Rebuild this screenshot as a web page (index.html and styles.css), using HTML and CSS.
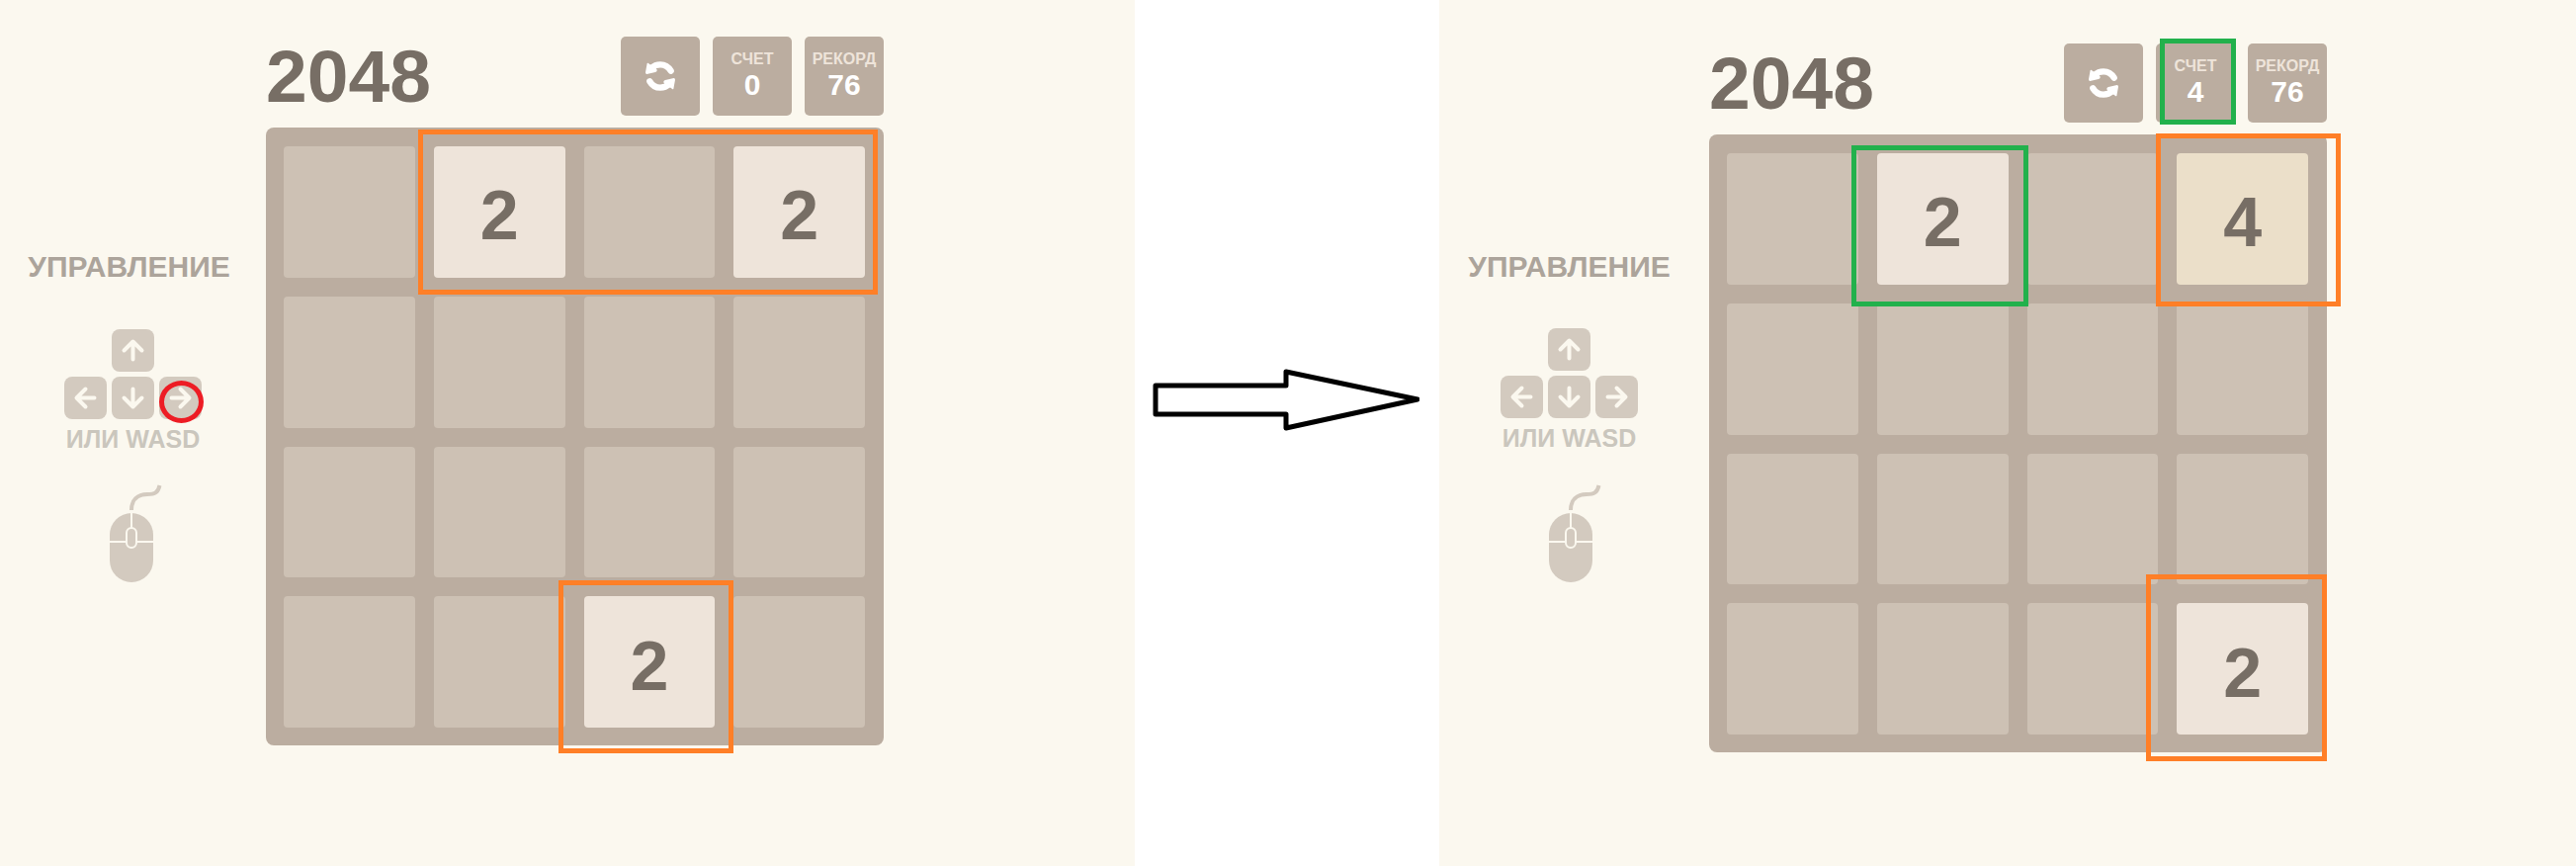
FILE: index.html
```html
<!DOCTYPE html>
<html lang="ru">
<head>
<meta charset="utf-8">
<title>2048</title>
<link rel="stylesheet" href="styles.css">
</head>
<body>
<svg class="sprite" aria-hidden="true">
  <symbol id="icon-refresh" viewBox="0 0 90 90">
    <g id="refresh-half">
      <path d="M77 29C70 17 58 10 45 10C35 10 26 13 19 20" fill="none" stroke="currentColor" stroke-width="19" stroke-linecap="round"/>
      <path d="M5 6Q8 3 12 9L20 12L34 24Q37 31 30 33L4 39Q0 39 0 34Z" fill="currentColor"/>
    </g>
    <use href="#refresh-half" transform="rotate(180 45 45)"/>
  </symbol>
  <symbol id="icon-arrow" viewBox="0 0 43 43">
    <path d="M21.500 30.500V13M12.500 21.500L21.500 12.500L30.500 21.500" fill="none" stroke="currentColor" stroke-width="4" stroke-linecap="round" stroke-linejoin="round"/>
  </symbol>
  <symbol id="icon-mouse" viewBox="0 0 53 100">
    <path d="M22 27C22 17 28 11 38 11C46 11 49 9 50.500 2" fill="none" stroke="currentColor" stroke-width="4"/>
    <rect x="0" y="30" width="44" height="70" rx="22" fill="currentColor"/>
    <path d="M22 29V45M0 59H17M27 59H44" fill="none" stroke="#fbf8ef" stroke-width="2"/>
    <rect x="17" y="45" width="10" height="20" rx="5" fill="currentColor" stroke="#fbf8ef" stroke-width="2"/>
  </symbol>
</svg>
<main class="scene">
  <section class="panel panel-before">
    <aside class="controls">
      <h2 class="controls-title">УПРАВЛЕНИЕ</h2>
      <div class="keys">
        <svg class="key key-up"><use href="#icon-arrow"/></svg>
        <svg class="key key-left"><use href="#icon-arrow"/></svg>
        <svg class="key key-down"><use href="#icon-arrow"/></svg>
        <svg class="key key-right"><use href="#icon-arrow"/></svg>
        <span class="mark mark-key"></span>
      </div>
      <p class="controls-note">ИЛИ WASD</p>
      <svg class="mouse"><use href="#icon-mouse"/></svg>
    </aside>
    <div class="game">
      <header class="top">
        <h1 class="title">2048</h1>
        <div class="stats">
          <button class="box restart" type="button" aria-label="Заново"><svg class="refresh"><use href="#icon-refresh"/></svg></button>
          <div class="box"><span class="label">СЧЕТ</span><span class="value">0</span></div>
          <div class="box"><span class="label">РЕКОРД</span><span class="value">76</span></div>
        </div>
      </header>
      <div class="board">
        <div class="cell"></div><div class="cell two">2</div><div class="cell"></div><div class="cell two">2</div>
        <div class="cell"></div><div class="cell"></div><div class="cell"></div><div class="cell"></div>
        <div class="cell"></div><div class="cell"></div><div class="cell"></div><div class="cell"></div>
        <div class="cell"></div><div class="cell"></div><div class="cell two">2</div><div class="cell"></div>
        <span class="mark orange mark-pair"></span>
        <span class="mark orange mark-bottom"></span>
      </div>
    </div>
  </section>
  <div class="between">
    <svg class="arrow" viewBox="0 0 270 64"><path d="M3 17H135V3L268 31L135 60V46H3Z" fill="none" stroke="#000" stroke-width="5" stroke-linejoin="round"/></svg>
  </div>
  <section class="panel panel-after">
    <aside class="controls">
      <h2 class="controls-title">УПРАВЛЕНИЕ</h2>
      <div class="keys">
        <svg class="key key-up"><use href="#icon-arrow"/></svg>
        <svg class="key key-left"><use href="#icon-arrow"/></svg>
        <svg class="key key-down"><use href="#icon-arrow"/></svg>
        <svg class="key key-right"><use href="#icon-arrow"/></svg>
      </div>
      <p class="controls-note">ИЛИ WASD</p>
      <svg class="mouse"><use href="#icon-mouse"/></svg>
    </aside>
    <div class="game">
      <header class="top">
        <h1 class="title">2048</h1>
        <div class="stats">
          <button class="box restart" type="button" aria-label="Заново"><svg class="refresh"><use href="#icon-refresh"/></svg></button>
          <div class="box"><span class="label">СЧЕТ</span><span class="value">4</span><span class="mark green mark-score"></span></div>
          <div class="box"><span class="label">РЕКОРД</span><span class="value">76</span></div>
        </div>
      </header>
      <div class="board">
        <div class="cell"></div><div class="cell two">2</div><div class="cell"></div><div class="cell four">4</div>
        <div class="cell"></div><div class="cell"></div><div class="cell"></div><div class="cell"></div>
        <div class="cell"></div><div class="cell"></div><div class="cell"></div><div class="cell"></div>
        <div class="cell"></div><div class="cell"></div><div class="cell"></div><div class="cell two">2</div>
        <span class="mark green mark-new"></span>
        <span class="mark orange mark-merged"></span>
        <span class="mark orange mark-moved"></span>
      </div>
    </div>
  </section>
</main>
</body>
</html>
```
FILE: styles.css
```css
* {
  box-sizing: border-box;
}

body {
  margin: 0;
  background: #fff;
  color: #776e65;
  font-family: "Liberation Sans", Arial, sans-serif;
  font-weight: bold;
}

h1, h2, p {
  margin: 0;
}

.sprite {
  position: absolute;
  width: 0;
  height: 0;
}

.scene {
  display: grid;
  grid-template-columns: 1148fr 308fr 1150fr;
  min-height: 100vh;
}

.panel {
  display: grid;
  align-items: start;
  background: #fbf8ef;
}

.panel-before {
  grid-template-columns: 269fr 625fr 254fr;
}

.panel-after {
  grid-template-columns: 273fr 625fr 252fr;
}

/* Controls column */
.controls {
  display: flex;
  flex-direction: column;
  align-items: center;
  padding: 253px 10px 0 0;
}

.panel-before .controls {
  padding-right: 8px;
}

.controls-title {
  color: #aca49b;
  font-size: 30px;
  line-height: 34px;
}

.keys {
  position: relative;
  display: grid;
  grid-template-columns: repeat(3, 43px);
  grid-template-areas: ". up ." "left down right";
  gap: 5px;
  margin-top: 45px;
}

.key {
  width: 43px;
  height: 43px;
  border-radius: 8px;
  background: #d3cabf;
  color: #fbf8ef;
}

.key-up {
  grid-area: up;
}

.key-left {
  grid-area: left;
  transform: rotate(-90deg);
}

.key-down {
  grid-area: down;
  transform: rotate(180deg);
}

.key-right {
  grid-area: right;
  transform: rotate(90deg);
}

.controls-note {
  margin-top: 5px;
  color: #cac6bd;
  font-size: 25px;
  line-height: 30px;
}

.mouse {
  width: 53px;
  height: 100px;
  margin: 31px 0 0 12px;
  color: #d3cabf;
}

.panel-before .keys {
  margin: 46px 0 0 8px;
}

.panel-before .controls-note {
  margin-left: 8px;
}

.panel-before .mouse {
  margin: 30px 0 0 14px;
}

/* Game column */
.top {
  display: flex;
  align-items: center;
  justify-content: space-between;
  padding: 37px 0 12px;
}

.panel-after .top {
  padding-top: 44px;
}

.title {
  font-size: 75px;
  line-height: 80px;
}

.stats {
  display: flex;
  gap: 13px;
}

.box {
  position: relative;
  display: flex;
  flex-direction: column;
  align-items: center;
  justify-content: center;
  width: 80px;
  height: 80px;
  padding: 0;
  border: 0;
  border-radius: 5px;
  background: #bbada0;
  color: #fff;
}

.refresh {
  width: 30px;
  height: 30px;
}

.label {
  color: #eee4da;
  font-size: 16px;
  line-height: 18px;
}

.value {
  font-size: 30px;
  line-height: 34px;
}

.board {
  position: relative;
  display: grid;
  grid-template-columns: repeat(4, 1fr);
  gap: 19px;
  padding: 19px 19px 18px 18px;
  border-radius: 8px;
  background: #bbada0;
}

.cell {
  display: flex;
  align-items: center;
  justify-content: center;
  aspect-ratio: 1;
  padding-top: 8px;
  border-radius: 4px;
  background: #cdc1b4;
  font-size: 70px;
  line-height: 80px;
}

.two {
  background: #eee4da;
}

.four {
  background: #ebdfc9;
}

.between {
  padding: 373px 20px 0 18px;
}

.arrow {
  display: block;
  width: 100%;
}

/* Highlight marks over the scene */
.mark {
  position: absolute;
  border: 5px solid;
}

.orange {
  border-color: #ff7f27;
}

.green {
  border-color: #22b14c;
}

.mark-key {
  top: 52px;
  left: 96px;
  width: 45px;
  height: 43px;
  border-color: #ed1c24;
  border-radius: 50%;
}

.mark-pair {
  top: 2px;
  left: 154px;
  width: 465px;
  height: 167px;
}

.mark-bottom {
  top: 458px;
  left: 296px;
  width: 177px;
  height: 175px;
}

.mark-score {
  top: -5px;
  left: 4px;
  width: 77px;
  height: 87px;
}

.mark-new {
  top: 11px;
  left: 144px;
  width: 179px;
  height: 163px;
}

.mark-merged {
  top: -1px;
  left: 452px;
  width: 187px;
  height: 175px;
}

.mark-moved {
  top: 445px;
  left: 442px;
  width: 183px;
  height: 189px;
}
```
